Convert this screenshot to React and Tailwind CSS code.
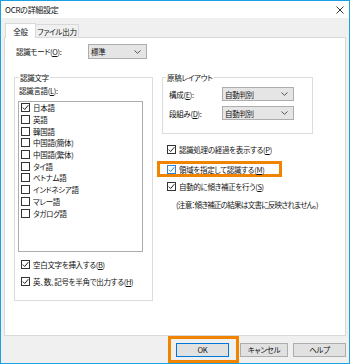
import React from 'react'

const Check = ({ checked, blue }) => (
  <span
    className={
      'w-[9px] h-[9px] shrink-0 border bg-white flex items-center justify-center ' +
      (blue ? 'border-[#2b83d8]' : 'border-[#333333]')
    }
  >
    {checked && (
      <svg width="7" height="7" viewBox="0 0 7 7">
        <path d="M0.8 3.6 L2.7 5.5 L6.3 1.2" fill="none" stroke={blue ? '#2b83d8' : '#222222'} strokeWidth="1" />
      </svg>
    )}
  </span>
)

const Select = ({ value, w }) => (
  <div className={'h-[15px] flex items-center justify-between border border-[#adadad] bg-[#e5e5e5] pl-[2px] pr-[5px] ' + w}>
    <span>{value}</span>
    <svg width="7" height="4" viewBox="0 0 7 4">
      <path d="M0.5 0.5 L3.5 3.3 L6.5 0.5" fill="none" stroke="#555555" strokeWidth="1" />
    </svg>
  </div>
)

const languages = [
  ['日本語', true],
  ['英語', false],
  ['韓国語', false],
  ['中国語(簡体)', false],
  ['中国語(繁体)', false],
  ['タイ語', false],
  ['ベトナム語', false],
  ['インドネシア語', false],
  ['マレー語', false],
  ['タガログ語', false],
]

const Row = ({ label, checked = true, blue }) => (
  <div className="h-[11px] flex items-center gap-[3px] whitespace-nowrap">
    <Check checked={checked} blue={blue} />
    <span>{label}</span>
  </div>
)

const App = () => {
  return (
    <div
      className="w-[350px] h-[364px] border border-[#1ba1e2] bg-[#f0f0f0] flex flex-col text-[7.5px] leading-[11px] tracking-[-0.3px] text-[#111111] [font-feature-settings:'palt']"
      style={{ fontFamily: '"Noto Sans CJK JP", "Noto Sans", sans-serif' }}
    >
      {/* title bar */}
      <div className="h-[17px] shrink-0 bg-white flex items-center justify-between pl-[4px] pr-[5px]">
        <span className="text-[8px]">OCRの詳細設定</span>
        <svg width="8" height="8" viewBox="0 0 8 8">
          <path d="M0.5 0.5 L7.5 7.5 M7.5 0.5 L0.5 7.5" stroke="#333333" strokeWidth="1" />
        </svg>
      </div>

      {/* tabs */}
      <div className="h-[19px] shrink-0 flex items-end pl-[4px]">
        <div className="relative z-10 -mb-px h-[15px] w-[31px] bg-white border border-b-0 border-[#d9d9d9] flex items-center justify-center">
          全般
        </div>
        <div className="h-[13px] w-[43px] border border-l-0 border-b-0 border-[#d9d9d9] flex items-center justify-center whitespace-nowrap">
          ファイル出力
        </div>
      </div>

      {/* panel */}
      <div className="ml-[3px] w-[342px] h-[299px] shrink-0 bg-white border border-[#d9d9d9]">
        <div className="mt-[6px] ml-[11px] h-[15px] flex items-center">
          <span className="w-[72px]">認識モード(<span className="underline">O</span>):</span>
          <Select value="標準" w="w-[59px]" />
        </div>

        <div className="mt-[13px] flex items-start pl-[9px] gap-[9px]">
          {/* left group */}
          <fieldset className="w-[139px] border border-[#dcdcdc] pl-[3px] pb-[13px]">
            <legend className="ml-[1px] px-[1px] -mx-[1px]">認識文字</legend>
            <div className="mt-[2px] ml-[1px]">認識言語(<span className="underline">L</span>):</div>
            <div className="mt-[5px] w-[125px] h-[151px] border border-[#acacac] pl-[2px]">
              {languages.map(([name, on]) => (
                <div key={name} className="h-[11.7px] flex items-center gap-[3px]">
                  <Check checked={on} />
                  <span>{name}</span>
                </div>
              ))}
            </div>
            <div className="mt-[7px] pl-[3px] flex flex-col gap-[6px]">
              <Row label={<>空白文字を挿入する(<span className="underline">B</span>)</>} />
              <Row label={<>英、数、記号を半角で出力する(<span className="underline">H</span>)</>} />
            </div>
          </fieldset>

          {/* right column */}
          <div className="w-[151px] flex flex-col">
            <fieldset className="border border-[#dcdcdc] pl-[4px] pb-[13px]">
              <legend className="px-[1px] -mx-[1px]">原稿レイアウト</legend>
              <div className="mt-[4px] ml-[2px] flex flex-col gap-[5px]">
                <div className="h-[14px] flex items-center">
                  <span className="w-[53px]">構成(<span className="underline">E</span>):</span>
                  <Select value="自動判別" w="w-[72px] !h-[14px]" />
                </div>
                <div className="h-[14px] flex items-center">
                  <span className="w-[53px]">段組み(<span className="underline">D</span>):</span>
                  <Select value="自動判別" w="w-[72px] !h-[14px]" />
                </div>
              </div>
            </fieldset>

            <div className="mt-[10px] pl-[5px]">
              <Row label={<>認識処理の経過を表示する(<span className="underline">P</span>)</>} />
            </div>
            <div className="mt-[6px] -ml-[5px] w-[125px] h-[16px] border-[3px] border-[#f08300] pl-[7px] flex items-center">
              <Row blue label={<>領域を指定して認識する(<span className="underline">M</span>)</>} />
            </div>
            <div className="mt-[4px] pl-[5px]">
              <Row label={<>自動的に傾き補正を行う(<span className="underline">S</span>)</>} />
            </div>
            <div className="mt-[7px] pl-[14px] whitespace-nowrap tracking-[-0.7px]">(注意：傾き補正の結果は文書に反映されません。)</div>
          </div>
        </div>
      </div>

      {/* buttons */}
      <div className="flex-1 flex items-center justify-end pr-[3px]">
        <div className="h-[27px] w-[71px] border-[3px] border-[#f08300] flex items-center pl-[5px]">
          <button className="w-[53px] h-[14px] bg-[#e1e1e1] border border-[#0078d7] flex items-center justify-center">
            OK
          </button>
        </div>
        <button className="ml-[1px] w-[48px] h-[14px] bg-[#e1e1e1] border border-[#adadad] flex items-center justify-center">
          キャンセル
        </button>
        <button className="ml-[5px] w-[53px] h-[14px] bg-[#e1e1e1] border border-[#adadad] flex items-center justify-center">
          ヘルプ
        </button>
      </div>
    </div>
  )
}

export default App
